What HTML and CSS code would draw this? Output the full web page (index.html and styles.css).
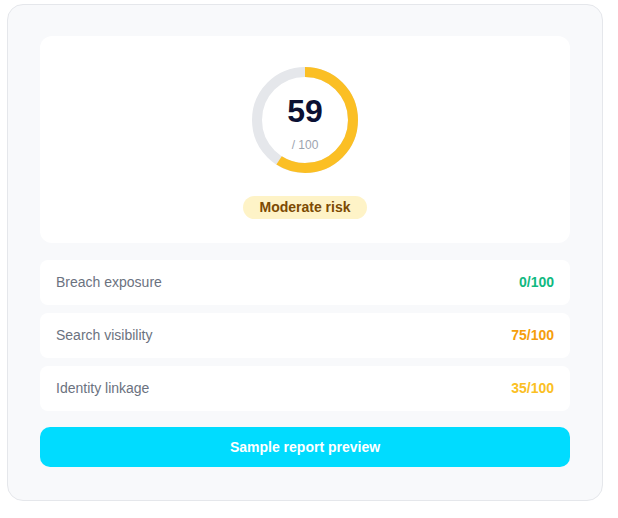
FILE: index.html
```html
<!DOCTYPE html>
<html>
  <head>
    <title>Risk score</title>
    <link rel="stylesheet" href="styles.css">
  </head>
  <body>
    <div class="panel">
      <div class="score-card">
        <div class="gauge">
          <svg width="106" height="106" viewBox="0 0 106 106">
            <circle cx="53" cy="53" r="48" class="track" />
            <circle cx="53" cy="53" r="48" class="arc"
              stroke-dasharray="177.9 301.6" transform="rotate(-90 53 53)" />
          </svg>
          <div class="gauge-text">
            <div class="score">59</div>
            <div class="out-of">/ 100</div>
          </div>
        </div>
        <div class="badge">Moderate risk</div>
      </div>

      <div class="metric">
        <span>Breach exposure</span>
        <strong class="good">0/100</strong>
      </div>
      <div class="metric">
        <span>Search visibility</span>
        <strong class="high">75/100</strong>
      </div>
      <div class="metric">
        <span>Identity linkage</span>
        <strong class="mid">35/100</strong>
      </div>

      <button class="preview-btn">Sample report preview</button>
    </div>
  </body>
</html>
```

FILE: styles.css
```css
:root {
  --panel: #f8f9fb;
  --border: #e5e7eb;
  --card: #ffffff;
  --text: #6b7280;
  --navy: #0b1033;
  --yellow: #fbbf24;
  --radius: 8px;
}

body {
  margin: 0;
  padding: 4px 0 0 7px;
  font-family: "Liberation Sans", Arial, sans-serif;
  background: #ffffff;
}

.panel {
  width: 596px;
  box-sizing: border-box;
  background: var(--panel);
  border: 1px solid var(--border);
  border-radius: 16px;
  padding: 31px 32px 33px;
  display: flex;
  flex-direction: column;
  gap: 8px;
}

.score-card {
  background: var(--card);
  border-radius: 12px;
  padding: 31px 0 24px;
  display: flex;
  flex-direction: column;
  align-items: center;
  margin-bottom: 9px;
}

.gauge {
  position: relative;
  width: 106px;
  height: 106px;
}

.gauge svg {
  display: block;
}

.track {
  fill: none;
  stroke: #e5e7eb;
  stroke-width: 10;
}

.arc {
  fill: none;
  stroke: var(--yellow);
  stroke-width: 10;
}

.gauge-text {
  position: absolute;
  top: 0;
  left: 0;
  right: 0;
  bottom: 0;
  display: flex;
  flex-direction: column;
  align-items: center;
  justify-content: center;
}

.score {
  font-size: 32px;
  font-weight: bold;
  color: var(--navy);
  line-height: 36px;
  margin-top: 4px;
}

.out-of {
  font-size: 12px;
  color: #9ca3af;
  margin-top: 9px;
}

.badge {
  margin-top: 23px;
  background: #fef3c7;
  color: #7c4a03;
  font-weight: bold;
  font-size: 14px;
  line-height: 23px;
  padding: 0 16px;
  border-radius: 999px;
}

.metric {
  background: var(--card);
  border-radius: var(--radius);
  height: 45px;
  padding: 0 16px 1px;
  box-sizing: border-box;
  display: flex;
  justify-content: space-between;
  align-items: center;
  font-size: 14px;
  color: var(--text);
}

.metric strong {
  font-size: 14px;
}

.good {
  color: #10b981;
}

.high {
  color: #f59e0b;
}

.mid {
  color: #fbbf24;
}

.preview-btn {
  margin-top: 8px;
  height: 40px;
  border: none;
  border-radius: 10px;
  background: #00dcff;
  color: #ffffff;
  font-family: inherit;
  font-size: 14px;
  font-weight: bold;
  cursor: pointer;
}
```
